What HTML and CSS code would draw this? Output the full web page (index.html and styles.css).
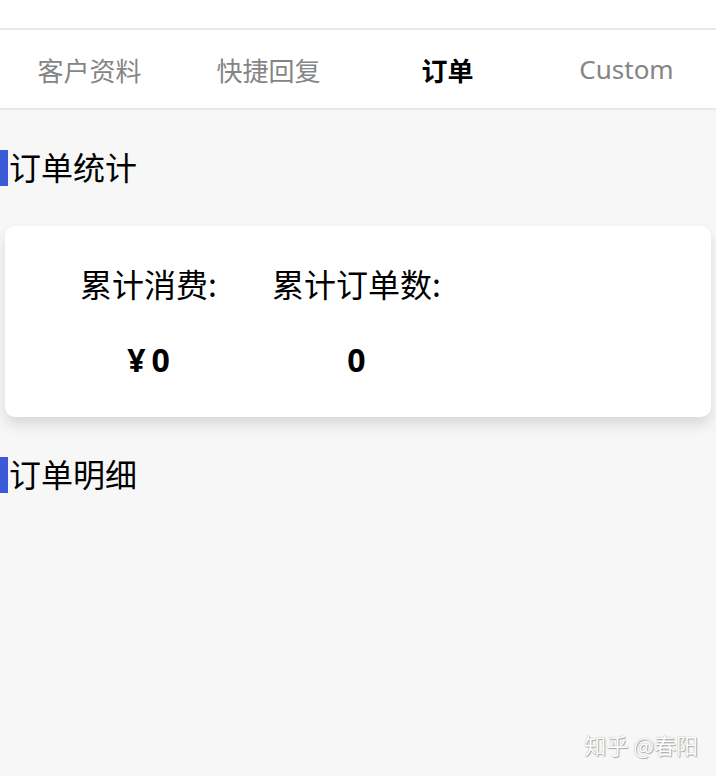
FILE: index.html
```html
<!DOCTYPE html>
<html lang="zh-CN">
<head>
    <meta charset="UTF-8">
    <meta name="viewport" content="width=device-width, initial-scale=1.0">
    <title>订单</title>
    <link rel="stylesheet" href="styles.css">
</head>
<body>
    <div class="top-bar"></div>
    <div class="tabs">
        <div class="tab">客户资料</div>
        <div class="tab">快捷回复</div>
        <div class="tab active">订单</div>
        <div class="tab latin">Custom</div>
    </div>

    <div class="content">
        <div class="section-title">订单统计</div>
        <div class="stat-card">
            <div class="stat">
                <div class="stat-label">累计消费:</div>
                <div class="stat-value"><span class="currency">¥</span>0</div>
            </div>
            <div class="stat">
                <div class="stat-label">累计订单数:</div>
                <div class="stat-value">0</div>
            </div>
        </div>
        <div class="section-title">订单明细</div>
    </div>

    <div class="watermark">知乎 @春阳</div>
</body>
</html>
```

FILE: styles.css
```css
html, body {
    height: 100%;
}
body {
    margin: 0;
    background-color: #f7f7f7;
    font-family: "Noto Sans CJK SC", "Noto Sans", sans-serif;
    color: #000;
    position: relative;
    overflow: hidden;
}
.top-bar {
    height: 28px;
    background: #fff;
    border-bottom: 2px solid #e8e8e8;
}
.tabs {
    display: flex;
    height: 78px;
    background: #fff;
    border-bottom: 2px solid #e8e8e8;
}
.tab {
    flex: 1;
    display: flex;
    align-items: center;
    justify-content: center;
    font-size: 26px;
    color: #858585;
}
.tab.latin {
    font-family: "Noto Sans", sans-serif;
}
.tab.active {
    color: #000;
    font-weight: bold;
}
.content {
    padding-top: 40px;
}
.section-title {
    border-left: 8px solid #3a5ad8;
    padding-left: 1px;
    font-size: 32px;
    line-height: 33px;
    height: 36px;
}
.stat-card {
    margin: 40px 5px 40px 5px;
    height: 191px;
    background: #fff;
    border-radius: 10px;
    box-shadow: 0 8px 14px rgba(0, 0, 0, 0.12);
    display: flex;
    gap: 55px;
    padding-left: 75px;
    box-sizing: border-box;
}
.stat {
    text-align: center;
    padding-top: 37px;
}
.stat-label {
    font-size: 32px;
    line-height: 40px;
}
.stat-value {
    margin-top: 37px;
    font-size: 32px;
    line-height: 40px;
    font-weight: bold;
    font-family: "Noto Sans", "Noto Sans CJK SC", sans-serif;
}
.currency {
    margin-right: 6px;
}
.watermark {
    position: absolute;
    right: 18px;
    bottom: 16px;
    font-size: 22px;
    color: #fff;
    text-shadow: 0 0 1px #999, 1px 1px 1px #aaa;
}
```
